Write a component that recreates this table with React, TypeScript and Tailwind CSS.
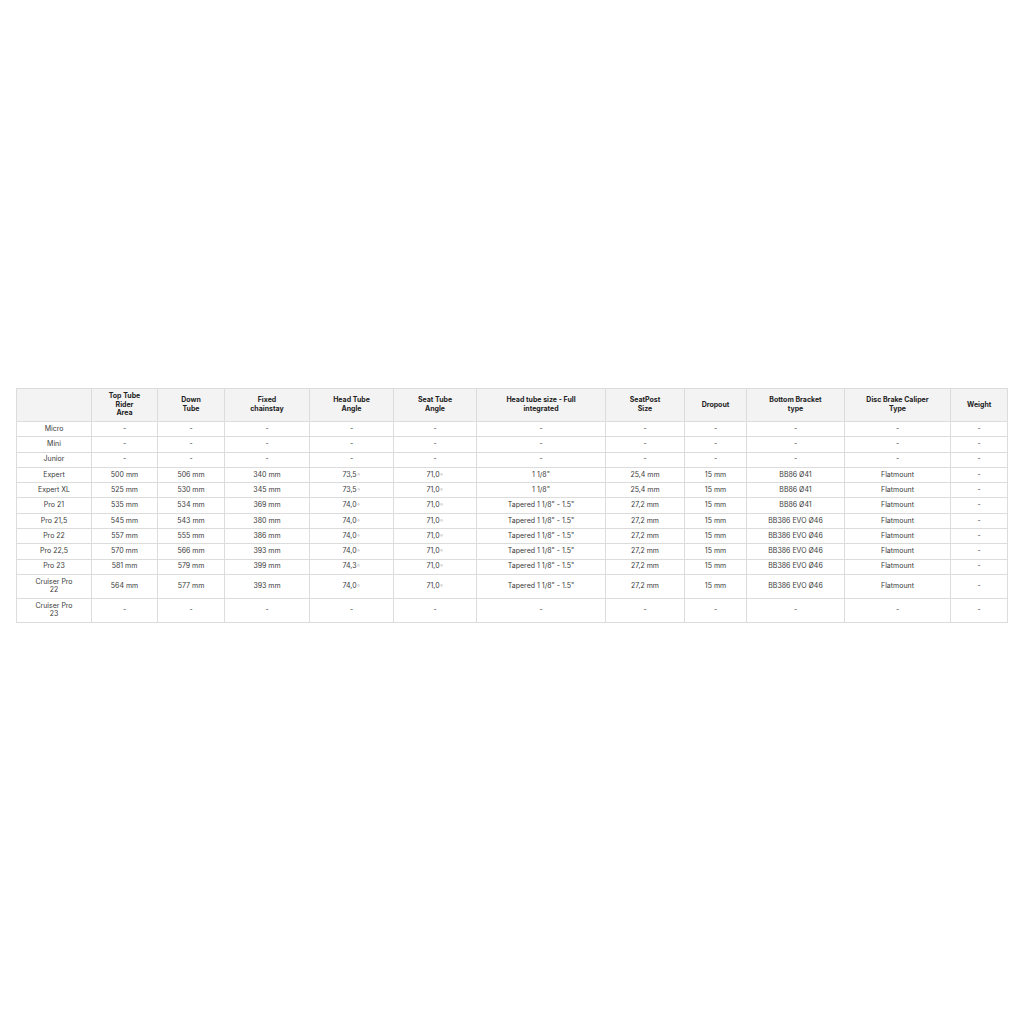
const headers = [
  "",
  "Top Tube Rider Area",
  "Down Tube",
  "Fixed chainstay",
  "Head Tube Angle",
  "Seat Tube Angle",
  "Head tube size - Full integrated",
  "SeatPost Size",
  "Dropout",
  "Bottom Bracket type",
  "Disc Brake Caliper Type",
  "Weight",
];

const widths = [75, 66, 67, 85, 84, 83, 129, 79, 62, 98, 106, 57];

const dash = ["-", "-", "-", "-", "-", "-", "-", "-", "-", "-", "-"];

const rows: { name: string; cells: string[]; tall?: boolean }[] = [
  { name: "Micro", cells: dash },
  { name: "Mini", cells: dash },
  { name: "Junior", cells: dash },
  { name: "Expert", cells: ["500 mm", "506 mm", "340 mm", "73,5◦", "71,0◦", "1 1/8\"", "25,4 mm", "15 mm", "BB86 Ø41", "Flatmount", "-"] },
  { name: "Expert XL", cells: ["525 mm", "530 mm", "345 mm", "73,5◦", "71,0◦", "1 1/8\"", "25,4 mm", "15 mm", "BB86 Ø41", "Flatmount", "-"] },
  { name: "Pro 21", cells: ["535 mm", "534 mm", "369 mm", "74,0◦", "71,0◦", "Tapered 1 1/8\" - 1.5\"", "27,2 mm", "15 mm", "BB86 Ø41", "Flatmount", "-"] },
  { name: "Pro 21,5", cells: ["545 mm", "543 mm", "380 mm", "74,0◦", "71,0◦", "Tapered 1 1/8\" - 1.5\"", "27,2 mm", "15 mm", "BB386 EVO Ø46", "Flatmount", "-"] },
  { name: "Pro 22", cells: ["557 mm", "555 mm", "386 mm", "74,0◦", "71,0◦", "Tapered 1 1/8\" - 1.5\"", "27,2 mm", "15 mm", "BB386 EVO Ø46", "Flatmount", "-"] },
  { name: "Pro 22,5", cells: ["570 mm", "566 mm", "393 mm", "74,0◦", "71,0◦", "Tapered 1 1/8\" - 1.5\"", "27,2 mm", "15 mm", "BB386 EVO Ø46", "Flatmount", "-"] },
  { name: "Pro 23", cells: ["581 mm", "579 mm", "399 mm", "74,3◦", "71,0◦", "Tapered 1 1/8\" - 1.5\"", "27,2 mm", "15 mm", "BB386 EVO Ø46", "Flatmount", "-"] },
  { name: "Cruiser Pro 22", tall: true, cells: ["564 mm", "577 mm", "393 mm", "74,0◦", "71,0◦", "Tapered 1 1/8\" - 1.5\"", "27,2 mm", "15 mm", "BB386 EVO Ø46", "Flatmount", "-"] },
  { name: "Cruiser Pro 23", tall: true, cells: dash },
];

function Cell({ text }: { text: string }) {
  // degree sign in the source renders as a light small circle
  if (text.endsWith("◦")) {
    return (
      <>
        {text.slice(0, -1)}
        <span className="text-[#aaa]">◦</span>
      </>
    );
  }
  return <>{text}</>;
}

export default function App() {
  return (
    <div className="min-h-screen bg-white pt-[388px] font-['Inter','Liberation_Sans',sans-serif]">
      <table className="mx-auto w-[991px] table-fixed border-collapse text-center text-[7px] leading-[8.7px] text-[#3a3a3a]">
        <colgroup>
          {widths.map((w, i) => (
            <col key={i} style={{ width: w }} />
          ))}
        </colgroup>
        <thead>
          <tr className="h-[33px] bg-[#f3f3f3]">
            {headers.map((h, i) => (
              <th
                key={i}
                className="border border-[#dcdcdc] px-[16px] font-bold text-[#222]"
              >
                {h}
              </th>
            ))}
          </tr>
        </thead>
        <tbody>
          {rows.map((r) => (
            <tr key={r.name} className={r.tall ? "h-[24px]" : "h-[15.3px]"}>
              <td className="border border-[#dcdcdc] px-[14px]">{r.name}</td>
              {r.cells.map((c, i) => (
                <td key={i} className="border border-[#dcdcdc] px-1">
                  <Cell text={c} />
                </td>
              ))}
            </tr>
          ))}
        </tbody>
      </table>
    </div>
  );
}
